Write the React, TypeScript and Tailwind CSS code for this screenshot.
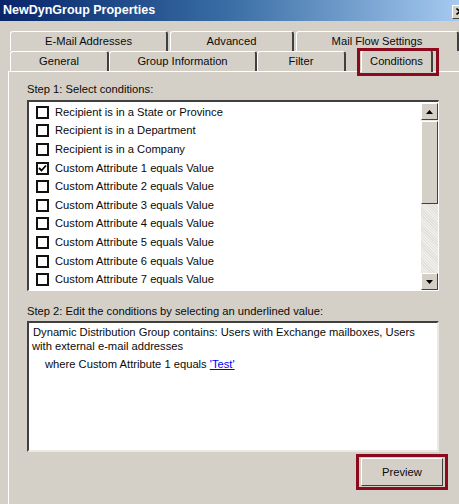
const conditions = [
  { label: "Recipient is in a State or Province", checked: false },
  { label: "Recipient is in a Department", checked: false },
  { label: "Recipient is in a Company", checked: false },
  { label: "Custom Attribute 1 equals Value", checked: true },
  { label: "Custom Attribute 2 equals Value", checked: false },
  { label: "Custom Attribute 3 equals Value", checked: false },
  { label: "Custom Attribute 4 equals Value", checked: false },
  { label: "Custom Attribute 5 equals Value", checked: false },
  { label: "Custom Attribute 6 equals Value", checked: false },
  { label: "Custom Attribute 7 equals Value", checked: false },
];

function Tab({ label, className }: { label: string; className: string }) {
  return (
    <div
      className={`flex h-[20px] items-center justify-center border-t border-l border-r-2 border-t-white border-l-white border-r-[#404040] rounded-t-[3px] ${className}`}
    >
      {label}
    </div>
  );
}

function Checkbox({ checked }: { checked: boolean }) {
  return (
    <div className="flex h-[13px] w-[13px] shrink-0 items-center justify-center border-2 border-[#111] bg-white">
      {checked && (
        <svg width="9" height="9" viewBox="0 0 9 9">
          <path d="M1 4 L3.5 6.5 L8 1.5" stroke="black" strokeWidth="1.8" fill="none" />
        </svg>
      )}
    </div>
  );
}

function ScrollBtn({ up }: { up: boolean }) {
  return (
    <div className="flex h-[17px] w-[17px] items-center justify-center border border-t-white border-l-white border-r-[#404040] border-b-[#404040] bg-[#d4d0c8]">
      <svg width="7" height="4" viewBox="0 0 7 4">
        <path d={up ? "M0 4 L3.5 0 L7 4 Z" : "M0 0 L3.5 4 L7 0 Z"} fill="black" />
      </svg>
    </div>
  );
}

export default function App() {
  return (
    <div
      className="relative h-[504px] w-[459px] overflow-hidden bg-[#d4d0c8] text-[11.2px] text-[#0a0a0a]"
      style={{ fontFamily: '"Liberation Sans", Arial, sans-serif' }}
    >
      {/* title bar */}
      <div className="flex h-[21px] items-center justify-between bg-gradient-to-r from-[#0a246a] via-[#3a6ea5] to-[#a6caf0] pl-[3px]">
        <span className="text-[12.5px] font-bold text-white">NewDynGroup Properties</span>
        <div className="mr-[-9px] mt-[2px] flex h-[14px] w-[16px] items-center justify-center border border-t-white border-l-white border-r-[#404040] border-b-[#404040] bg-[#d4d0c8]">
          <svg width="8" height="7" viewBox="0 0 8 7">
            <path d="M0.5 0.5 L7.5 6.5 M7.5 0.5 L0.5 6.5" stroke="black" strokeWidth="1.6" />
          </svg>
        </div>
      </div>

      {/* tabs */}
      <div className="pt-[10px]">
        <div className="flex pl-[10px]">
          <Tab label="E-Mail Addresses" className="w-[158px]" />
          <Tab label="Advanced" className="ml-[2px] w-[124px]" />
          <Tab label="Mail Flow Settings" className="ml-[2px] w-[163px]" />
        </div>
        <div className="flex items-end pl-[10px]">
          <Tab label="General" className="w-[99px]" />
          <Tab label="Group Information" className="w-[148px]" />
          <Tab label="Filter" className="w-[89px]" />
          <div className="relative ml-[15px] mt-[-4px]">
            <div className="relative z-10 mb-[-1px] flex h-[22px] w-[72px] items-center justify-center rounded-t-[3px] border-t border-l border-r-2 border-t-white border-l-white border-r-[#404040] bg-[#d4d0c8]">
              Conditions
            </div>
            <div className="absolute left-[-4px] top-[-2px] z-20 h-[28px] w-[82px] border-[3px] border-[#8b0a1e]" />
          </div>
        </div>
      </div>

      {/* panel */}
      <div className="ml-[8px] h-[440px] border-t border-l border-t-white border-l-white pl-[18px] pt-[8px]">
        <div className="mb-[2px] h-[18px] leading-[18px]">Step 1: Select conditions:</div>
        <div className="flex h-[191px] w-[412px] border-t-2 border-l-2 border-b border-r border-t-[#404040] border-l-[#404040] border-b-white border-r-white bg-white">
          <div className="flex-1 pt-[1px]">
            {conditions.map((c) => (
              <div key={c.label} className="flex h-[18.6px] items-center pl-[7px]">
                <Checkbox checked={c.checked} />
                <span className="ml-[6px]">{c.label}</span>
              </div>
            ))}
          </div>
          <div className="mt-[1px] flex w-[17px] flex-col bg-[#ebe9e4]">
            <ScrollBtn up />
            <div className="mt-[1px] h-[83px] border border-t-white border-l-white border-r-[#404040] border-b-[#404040] bg-[#d4d0c8]" />
            <div className="flex-1 bg-[repeating-linear-gradient(45deg,#f0efeb_0px,#f0efeb_1px,#e2e0da_1px,#e2e0da_2px)]" />
            <ScrollBtn up={false} />
          </div>
        </div>

        <div className="mt-[10px] h-[20px] leading-[20px]">Step 2: Edit the conditions by selecting an underlined value:</div>
        <div className="h-[131px] w-[412px] border-2 border-t-[#404040] border-l-[#404040] border-b-[#ece9e4] border-r-[#ece9e4] bg-white px-[4px] pt-[2px] leading-[14px]">
          <div>Dynamic Distribution Group contains: Users with Exchange mailboxes, Users</div>
          <div className="ml-[-1px]">with external e-mail addresses</div>
          <div className="mt-[4px] pl-[12px]">
            where Custom Attribute 1 equals <span className="text-[#0000ff] underline">'Test'</span>
          </div>
        </div>

        <div className="mt-[2px] flex w-[421px] justify-end">
          <div className="border-[3px] border-[#8b0a1e] px-[2px] py-[1px]">
            <div className="flex h-[28px] w-[82px] items-center justify-center border border-t-white border-l-white border-r-[#404040] border-b-[#404040] bg-[#d4d0c8]">
              Preview
            </div>
          </div>
        </div>
      </div>
    </div>
  );
}
